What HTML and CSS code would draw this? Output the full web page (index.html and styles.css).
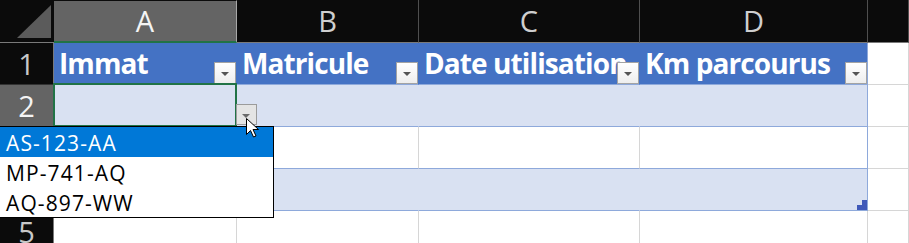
FILE: index.html
```html
<!DOCTYPE html>
<html lang="fr">
<head>
    <meta charset="UTF-8">
    <title>Suivi véhicules</title>
    <link rel="stylesheet" href="styles.css">
</head>
<body>
    <div class="sheet">
        <div class="corner"><span class="corner-tri"></span></div>
        <div class="col-head col-sel">A</div>
        <div class="col-head">B</div>
        <div class="col-head">C</div>
        <div class="col-head">D</div>
        <div class="col-head"></div>

        <div class="row-head">1</div>
        <div class="cell th">Immat<span class="filter"></span></div>
        <div class="cell th">Matricule<span class="filter"></span></div>
        <div class="cell th">Date utilisation<span class="filter"></span></div>
        <div class="cell th th-last">Km parcourus<span class="filter"></span></div>
        <div class="cell"></div>

        <div class="row-head row-sel">2</div>
        <div class="cell band sel"><span class="cell-drop"></span></div>
        <div class="cell band"></div>
        <div class="cell band"></div>
        <div class="cell band t-last"></div>
        <div class="cell"></div>

        <div class="row-head">3</div>
        <div class="cell plain"></div>
        <div class="cell plain"></div>
        <div class="cell plain"></div>
        <div class="cell plain t-last"></div>
        <div class="cell"></div>

        <div class="row-head">4</div>
        <div class="cell band"></div>
        <div class="cell band"></div>
        <div class="cell band"></div>
        <div class="cell band t-last">
            <svg class="resize" width="10" height="10" viewBox="0 0 10 10"><path d="M5 0H10V10H0V5H5Z" fill="#4059b9"/></svg>
        </div>
        <div class="cell"></div>

        <div class="row-head">5</div>
        <div class="cell"></div>
        <div class="cell"></div>
        <div class="cell"></div>
        <div class="cell"></div>
        <div class="cell"></div>

        <ul class="drop-list">
            <li class="active">AS-123-AA</li>
            <li>MP-741-AQ</li>
            <li>AQ-897-WW</li>
        </ul>

        <svg class="cursor" width="13" height="20" viewBox="0 0 13 20">
            <path d="M0.5 0.5V16.5L4.5 12.5L7.5 19L10 18L7 11.5H12.5Z" fill="#fff" stroke="#000" stroke-width="1" stroke-linejoin="miter"/>
        </svg>
    </div>
</body>
</html>
```

FILE: styles.css
```css
body {
    margin: 0;
    background: #fff;
    font-family: 'Open Sans', 'Noto Sans', sans-serif;
    overflow: hidden;
}

.sheet {
    position: relative;
    display: grid;
    grid-template-columns: 54px 183px 182px 221px 228px 41px;
    grid-template-rows: 43px repeat(5, 42px);
    width: 909px;
    height: 243px;
    overflow: hidden;
}

/* en-têtes de colonnes */
.corner {
    background: #0b0b0b;
    border-bottom: 1px solid #7a7a7a;
    display: flex;
    justify-content: flex-end;
    align-items: flex-end;
    padding: 0 3px 4px 0;
    box-sizing: border-box;
}

.corner-tri {
    width: 0;
    height: 0;
    border-left: 34px solid transparent;
    border-bottom: 33px solid #5b5b5b;
}

.col-head {
    background: #0b0b0b;
    color: #cfcfcf;
    font-size: 29px;
    line-height: 42px;
    text-align: center;
    border-right: 1px solid #4f4f4f;
    border-bottom: 1px solid #7a7a7a;
    box-sizing: border-box;
}

.col-sel {
    background: #646464;
    color: #f4f4f4;
    border-top: 1px solid #0b0b0b;
    border-right-color: #a8a8a8;
    border-bottom: 2px solid #217346;
    line-height: 40px;
}

/* en-têtes de lignes */
.row-head {
    background: #0b0b0b;
    color: #c8c8c8;
    font-size: 29px;
    line-height: 41px;
    text-align: center;
    border-right: 1px solid #7a7a7a;
    border-bottom: 1px solid #333;
    box-sizing: border-box;
}

.row-sel {
    background: #646464;
    color: #f4f4f4;
}

/* cellules */
.cell {
    position: relative;
    background: #fff;
    border-right: 1px solid #d6d6d6;
    border-bottom: 1px solid #d6d6d6;
    box-sizing: border-box;
}

.th {
    background: #4472c4;
    color: #fff;
    font-weight: bold;
    font-size: 28px;
    letter-spacing: -0.9px;
    line-height: 41px;
    padding-left: 5px;
    white-space: nowrap;
    overflow: hidden;
    border-right-color: #4472c4;
    border-bottom-color: #8ea9db;
}

.th-last {
    border-right-color: #8ea9db;
}

.band {
    background: #d9e1f2;
    border-right-color: #d9e1f2;
    border-bottom-color: #8ea9db;
}

.plain {
    border-bottom-color: #8ea9db;
}

.t-last {
    border-right-color: #8ea9db;
}

.filter {
    position: absolute;
    right: 0;
    bottom: 0;
    width: 22px;
    height: 22px;
    box-sizing: border-box;
    border: 1px solid #a3a3a3;
    background: linear-gradient(#ffffff, #eeeeee);
}

.filter::after,
.cell-drop::after {
    content: '';
    position: absolute;
    left: 6px;
    top: 9px;
    border-left: 4px solid transparent;
    border-right: 4px solid transparent;
    border-top: 4px solid #555;
}

.sel::before {
    content: '';
    position: absolute;
    left: -1px;
    top: -2px;
    right: -1px;
    bottom: -1px;
    border: 2px solid #217346;
}

.cell-drop {
    position: absolute;
    left: 182px;
    top: 19px;
    width: 21px;
    height: 21px;
    box-sizing: border-box;
    border: 1px solid #9b9b9b;
    background: #e4e4e4;
    z-index: 2;
}

.cell-drop::after {
    left: 5px;
    border-top-color: #6a6a6a;
}

.resize {
    position: absolute;
    right: 0;
    bottom: 0;
}

/* liste déroulante */
.drop-list {
    position: absolute;
    left: -1px;
    top: 126px;
    width: 273px;
    margin: 0;
    padding: 0;
    list-style: none;
    background: #fff;
    border: 1px solid #000;
    font-size: 21px;
    letter-spacing: 1.1px;
    color: #000;
    z-index: 3;
}

.drop-list li {
    height: 30px;
    line-height: 30px;
    padding: 1px 0 0 6px;
    box-sizing: border-box;
}

.drop-list .active {
    background: #0078d7;
    color: #fff;
}

.cursor {
    position: absolute;
    left: 246px;
    top: 118px;
    z-index: 4;
}
```
